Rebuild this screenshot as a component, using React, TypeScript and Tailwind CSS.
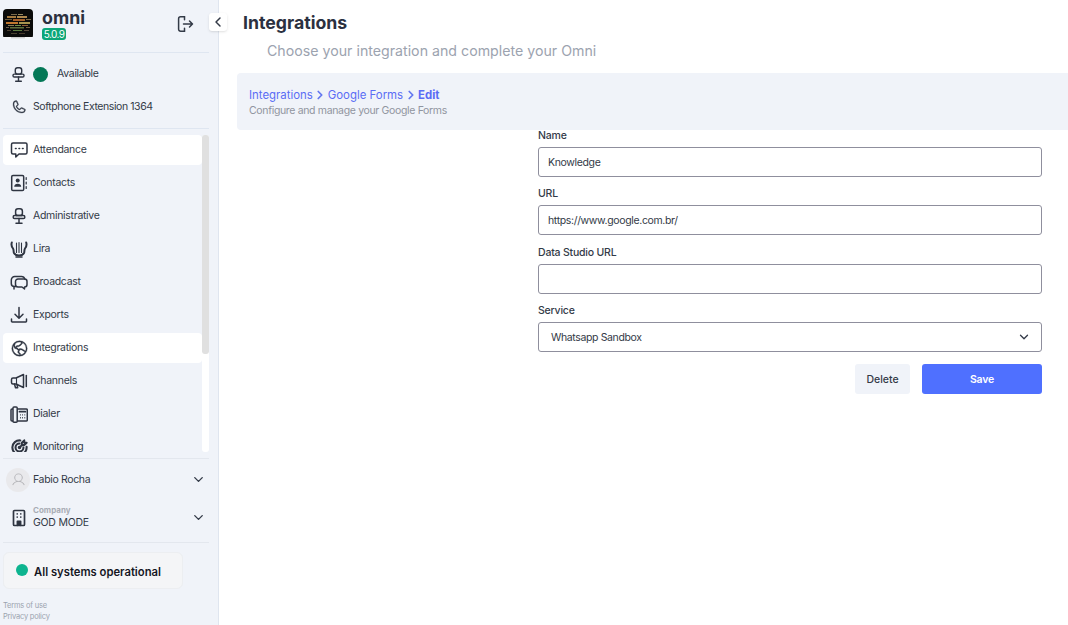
import React from "react";
import { PiPhone, PiGlobeHemisphereWest, PiUser } from "react-icons/pi";
import { TbTargetArrow } from "react-icons/tb";
import { ChevronDown, ChevronLeft, ChevronRight } from "lucide-react";

const ink = "#2f3542";

const Svg = ({ size = 18, children }: { size?: number; children: React.ReactNode }) => (
  <svg width={size} height={size} viewBox="0 0 18 18" fill="none" stroke={ink} strokeWidth="1.5" strokeLinecap="round" strokeLinejoin="round">
    {children}
  </svg>
);

const Chat = () => (
  <Svg>
    <path d="M3 2h12.5a1.5 1.5 0 0 1 1.5 1.5v8a1.5 1.5 0 0 1-1.5 1.5H9l-3.2 3v-3H3a1.5 1.5 0 0 1-1.5-1.5v-8A1.5 1.5 0 0 1 3 2Z" />
    <path d="M5.5 7.5h.6M9 7.5h.6M12.5 7.5h.6" strokeWidth="1.6" />
  </Svg>
);

const Contacts = () => (
  <Svg>
    <rect x="1.7" y="1.5" width="12" height="15" rx="1.3" />
    <circle cx="7.7" cy="6.6" r="2" fill={ink} stroke="none" />
    <path d="M4.2 12.7c0-2 1.5-3 3.5-3s3.5 1 3.5 3Z" fill={ink} stroke="none" />
    <path d="M16.2 3.5v2M16.2 8v2M16.2 12.5v2" strokeWidth="1.2" />
  </Svg>
);

const Chair = ({ size = 18 }: { size?: number }) => (
  <Svg size={size}>
    <rect x="5.6" y="1.8" width="6.8" height="6.8" rx="2.4" />
    <rect x="3.2" y="8.6" width="11.6" height="3" rx="1.3" />
    <path d="M9 11.6v4M6 16.2h6M6.6 8.6v0M11.4 8.6v0" />
  </Svg>
);

const Lyre = () => (
  <Svg>
    <path d="M1.8 2.5C1 5 1.8 7 3 8.5c1 1.5.3 3 1 4.5C5 15 7 15.5 9 15.5s4-.5 5-2.5c.7-1.5 0-3 1-4.5 1.2-1.5 2-3.5 1.2-6" strokeWidth="2" />
    <path d="M6.5 3v9.5M9 2.5v10M11.5 3v9.5" strokeWidth="1.1" />
    <path d="M6 17h6" />
  </Svg>
);

const Broadcast = () => (
  <Svg>
    <path d="M6 13.5H4.3A3 3 0 0 1 1.3 10.5V7a3.5 3.5 0 0 1 3.5-3.5h6.5A3.5 3.5 0 0 1 14.8 6" />
    <path d="M8 6h6.5A2.5 2.5 0 0 1 17 8.5v3a2.5 2.5 0 0 1-2.5 2.5v2l-2.5-2H8a2.5 2.5 0 0 1-2.5-2.5v-3A2.5 2.5 0 0 1 8 6Z" />
    <path d="M4 13.5v2.5" />
  </Svg>
);

const Download = () => (
  <Svg>
    <path d="M9 1.5v10.5M5 8.2 9 12.2l4-4" />
    <path d="M1.5 13v2.3a.7.7 0 0 0 .7.7h13.6a.7.7 0 0 0 .7-.7V13" />
  </Svg>
);

const Megaphone = () => (
  <Svg>
    <path d="M13.5 2.5 6 6H3a1.5 1.5 0 0 0-1.5 1.5v3A1.5 1.5 0 0 0 3 12h3l7.5 3.5Z" />
    <path d="M16.3 3.5v11" />
    <path d="M4.5 12l1 3.8h2.2L7 12.5" />
    <path d="M6.5 6v6" strokeWidth="1.1" />
  </Svg>
);

const Fax = () => (
  <Svg>
    <rect x="1" y="4" width="16.3" height="12" rx="1" />
    <rect x="3" y="2" width="4.2" height="15.2" rx="1" fill="#f0f3f9" />
    <path d="M9.5 6.7h5.8" strokeWidth="1.8" />
    <path d="M10 9.9h.8M12.2 9.9h.8M14.4 9.9h.8M10 12.8h.8M12.2 12.8h.8M14.4 12.8h.8" strokeWidth="1.4" strokeLinecap="butt" />
  </Svg>
);

const Building = () => (
  <Svg>
    <rect x="3.5" y="1.5" width="11" height="15" rx="1" strokeWidth="1.7" />
    <path d="M6.6 4.8h1.2M10.2 4.8h1.2M6.6 8.2h1.2M10.2 8.2h1.2" strokeWidth="1.7" strokeLinecap="butt" />
    <path d="M7.3 16.5v-4.2h3.4v4.2" fill={ink} />
  </Svg>
);

const SignOut = () => (
  <svg width="20" height="20" viewBox="0 0 20 20" fill="none" stroke="#333a47" strokeWidth="1.5" strokeLinecap="round" strokeLinejoin="round">
    <path d="M9.5 2.8H5.6a2 2 0 0 0-2 2v10.4a2 2 0 0 0 2 2h3.9" />
    <path d="M9.5 2.8v3M9.5 14.2v3" />
    <path d="M8.5 10H17.5M14.5 7l3 3-3 3" />
  </svg>
);

const marks: [number, number, number, number, string][] = [
  [8, 5, 6, 1, "#7c6b4b"], [15, 5, 5, 1, "#9a8a60"], [4, 7, 9, 2, "#a3793f"], [14, 7, 10, 2, "#b08a50"],
  [2, 10, 7, 1, "#6d5a3a"], [10, 10, 12, 2, "#a55f2a"], [23, 10, 5, 1, "#7f6a48"],
  [3, 13, 12, 2, "#c0772f"], [16, 13, 11, 2, "#a8944e"], [5, 16, 6, 1, "#857a52"], [12, 16, 6, 1, "#6f8f4a"],
  [19, 16, 6, 1, "#8c5a36"], [7, 18, 14, 1.5, "#5e6f3b"], [3, 18, 3, 1, "#6a5a4a"], [23, 18, 4, 1, "#75603f"],
  [10, 21, 9, 1, "#5d7a3f"], [4, 21, 4, 1, "#4e4232"], [21, 21, 5, 1, "#5a4a3a"], [8, 24, 6, 1, "#4a3f30"], [16, 24, 6, 1, "#47392c"],
];

const Logo = () => (
  <svg width="30" height="30" viewBox="0 0 30 30" className="shrink-0 rounded-sm">
    <rect width="30" height="28" fill="#0b0b0a" />
    <rect y="28" width="30" height="2" fill="#f4f5f7" />
    <rect x="8" y="28.5" width="14" height="0.7" fill="#a8a8a8" />
    {marks.map(([x, y, w, h, c], i) => (
      <rect key={i} x={x} y={y} width={w} height={h} fill={c} />
    ))}
  </svg>
);

const items: { label: string; icon: React.ReactNode; active?: boolean }[] = [
  { label: "Attendance", icon: <Chat />, active: true },
  { label: "Contacts", icon: <Contacts /> },
  { label: "Administrative", icon: <Chair /> },
  { label: "Lira", icon: <Lyre /> },
  { label: "Broadcast", icon: <Broadcast /> },
  { label: "Exports", icon: <Download /> },
  { label: "Integrations", icon: <PiGlobeHemisphereWest size={19} stroke="currentColor" strokeWidth={5} />, active: true },
  { label: "Channels", icon: <Megaphone /> },
  { label: "Dialer", icon: <Fax /> },
  { label: "Monitoring", icon: <TbTargetArrow size={19} strokeWidth={2.6} /> },
];

const Field = ({ label, value }: { label: string; value: string }) => (
  <div className="flex flex-col">
    <label className="h-[17px] text-[10.5px] font-medium leading-[12px] tracking-[-0.2px] text-[#333a47]">{label}</label>
    <input
      readOnly
      value={value}
      className="h-[30px] w-full rounded-[3px] border border-[#8f8f9d] bg-white px-[9px] text-[10.5px] tracking-[-0.35px] text-[#333a47] outline-none"
    />
  </div>
);

export default function App() {
  return (
    <div className="flex h-[625px] w-[1068px] overflow-hidden bg-white text-[#333a47] font-['Inter',sans-serif]">
      <aside className="relative flex h-full w-[219px] shrink-0 flex-col border-r border-[#dfe5ef] bg-[#f0f3f9] pl-[3px] pr-[9px]">
        <div className="flex h-[53px] shrink-0 items-start border-b border-[#dfe6f1] pt-[9px]">
          <Logo />
          <div className="ml-[9px] flex flex-col">
            <span className="text-[17.8px] font-bold leading-[17px] text-[#2b3040]">omni</span>
            <span className="mt-[2px] w-[24px] rounded-[3px] bg-[#0ca678] text-center text-[10px] leading-[12px] tracking-[-0.6px] text-white">5.0.9</span>
          </div>
          <span className="ml-auto mr-[14px] mt-[5px]"><SignOut /></span>
        </div>

        <div className="flex h-[76px] shrink-0 flex-col border-b border-[#dfe6f1]">
          <div className="flex h-[42px] items-center pl-[7px]">
            <Chair size={17} />
            <span className="ml-[6px] h-[15px] w-[15px] rounded-full bg-[#047857]" />
            <span className="ml-[9px] text-[10.5px] tracking-[-0.3px]">Available</span>
          </div>
          <div className="flex h-[24px] items-center pl-[8px]">
            <PiPhone size={16} stroke="currentColor" strokeWidth={5} />
            <span className="ml-[6px] text-[10.5px] tracking-[-0.42px]">Softphone Extension 1364</span>
          </div>
        </div>

        <div className="relative mt-[6px] h-[317px] shrink-0 overflow-hidden">
          <div className="flex flex-col gap-[3px] pr-[7px]">
            {items.map((it) => (
              <div
                key={it.label}
                className={`flex h-[30px] shrink-0 items-center rounded-[4px] pl-[7px] ${it.active ? "bg-white" : ""}`}
              >
                <span className="flex w-[23px] shrink-0 items-center text-[#2f3542]">{it.icon}</span>
                <span className="text-[10.5px] tracking-[-0.3px]">{it.label}</span>
              </div>
            ))}
          </div>
          <div className="absolute right-0 top-0 h-full w-[7px] rounded-[3px] bg-white">
            <div className="h-[219px] w-full rounded-[3px] bg-[#e0e0e0]" />
          </div>
        </div>

        <div className="mt-[6px] flex h-[85px] shrink-0 flex-col border-y border-[#e3e7ee]">
          <div className="flex h-[40px] shrink-0 items-center pl-[3px] pt-[1px]">
            <span className="flex h-[24px] w-[24px] items-center justify-center rounded-full bg-[#e9e9ec]">
              <PiUser size={15} className="text-[#b4b4b8]" />
            </span>
            <span className="ml-[3px] text-[10.5px] tracking-[-0.35px]">Fabio Rocha</span>
            <ChevronDown size={15} strokeWidth={2.2} className="ml-auto mr-[3px]" />
          </div>
          <div className="flex items-center pl-[7px] pt-[6px]">
            <Building />
            <div className="ml-[5px] flex flex-col">
              <span className="text-[8px] font-bold leading-[10px] text-[#a9adb5]">Company</span>
              <span className="text-[10.5px] leading-[16px] tracking-[-0.25px]">GOD MODE</span>
            </div>
            <ChevronDown size={15} strokeWidth={2.2} className="ml-auto mr-[3px] mb-[2px]" />
          </div>
        </div>

        <div className="mt-[9px] flex h-[37px] w-[180px] shrink-0 items-center rounded-[6px] border border-[#eceef1] bg-[#f4f5f7] pl-[12px]">
          <span className="mb-[2px] h-[12px] w-[12px] rounded-full bg-[#0db48f]" />
          <span className="ml-[6px] mt-[3px] text-[11.25px] font-semibold text-[#14171f]">All systems operational</span>
        </div>

        <div className="mt-[11px] flex flex-col text-[7.5px] leading-[11px] tracking-[-0.2px] text-[#9ca3af]">
          <span>Terms of use</span>
          <span>Privacy policy</span>
        </div>

        <button className="absolute left-[209px] top-[13px] flex h-[18px] w-[18px] items-center justify-center rounded-[3px] bg-white shadow-sm">
          <ChevronLeft size={16} strokeWidth={2.2} />
        </button>
      </aside>

      <main className="flex min-w-0 flex-1 flex-col pl-[18px]">
        <h1 className="ml-[6px] mt-[11px] text-[17.7px] font-bold leading-[24px] text-[#2b3040]">Integrations</h1>
        <p className="ml-[30px] mt-[5px] text-[14.2px] leading-[22px] text-[#9ca3af]">Choose your integration and complete your Omni</p>
        <div className="mt-[11px] flex h-[57px] flex-col justify-center gap-[1px] rounded-l-[4px] bg-[#f0f3f9] pl-[12px] pt-[1px]">
          <div className="flex items-center text-[11.4px] leading-[15px] text-[#5a6cf5]">
            <span>Integrations</span>
            <ChevronRight size={14} strokeWidth={3} className="mx-[0.5px] text-[#6477f0]" />
            <span>Google Forms</span>
            <ChevronRight size={14} strokeWidth={3} className="mx-[0.5px] text-[#6477f0]" />
            <span className="font-bold">Edit</span>
          </div>
          <p className="text-[10.5px] leading-[13px] tracking-[-0.34px] text-[#9095a0]">Configure and manage your Google Forms</p>
        </div>

        <form className="ml-[301px] mr-[26px] flex flex-col gap-[11.33px]">
          <Field label="Name" value="Knowledge" />
          <Field label="URL" value="https://www.google.com.br/" />
          <Field label="Data Studio URL" value="" />
          <div className="flex flex-col">
            <label className="h-[17px] text-[10.5px] font-medium leading-[12px] tracking-[-0.2px] text-[#333a47]">Service</label>
            <div className="flex h-[30px] items-center justify-between rounded-[3px] border border-[#8f8f9d] bg-white pl-[12px] pr-[10px] pt-[1px] text-[10.5px] tracking-[-0.37px]">
              <span>Whatsapp Sandbox</span>
              <ChevronDown size={14} strokeWidth={2.2} />
            </div>
          </div>
          <div className="mt-[1px] flex justify-end gap-[12px]">
            <button type="button" className="h-[30px] w-[55px] rounded-[3px] bg-[#f0f3f9] pt-[1px] text-[10.5px] font-medium">Delete</button>
            <button type="button" className="h-[30px] w-[120px] rounded-[3px] bg-[#4f70ff] pt-[1px] text-[10.5px] font-semibold tracking-[-0.2px] text-white">Save</button>
          </div>
        </form>
      </main>
    </div>
  );
}
